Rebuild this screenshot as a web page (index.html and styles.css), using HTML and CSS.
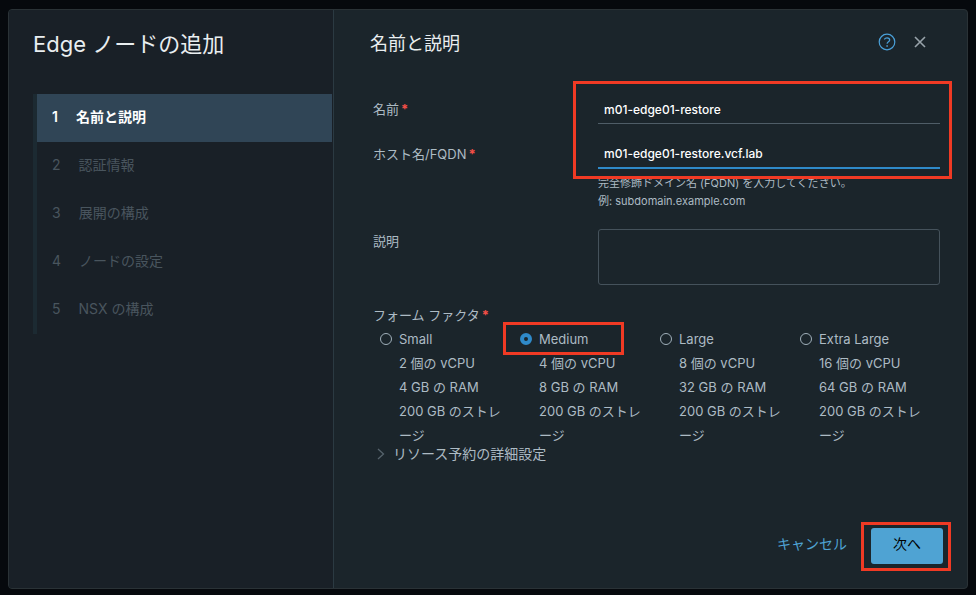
FILE: index.html
```html
<!DOCTYPE html>
<html lang="ja">

<head>
    <meta charset="UTF-8">
    <meta name="viewport" content="width=device-width, initial-scale=1.0">
    <title>Edge ノードの追加</title>
    <link rel="stylesheet" href="styles.css">
</head>

<body>
    <div class="wizard">
        <nav class="sidebar">
            <h1>Edge ノードの追加</h1>
            <ol class="steps">
                <li class="step active"><span>1</span><span>名前と説明</span></li>
                <li class="step"><span>2</span><span>認証情報</span></li>
                <li class="step"><span>3</span><span>展開の構成</span></li>
                <li class="step"><span>4</span><span>ノードの設定</span></li>
                <li class="step"><span>5</span><span>NSX の構成</span></li>
            </ol>
        </nav>

        <form class="content">
            <header class="header">
                <h2>名前と説明</h2>
                <button type="button" class="icon-button help" aria-label="ヘルプ">
                    <svg width="18" height="18" viewBox="0 0 18 18" fill="none" stroke="currentColor">
                        <circle cx="9" cy="9" r="7.8" stroke-width="1.2" />
                        <path d="M6.3 6.4C7 5.3 7.9 4.9 9 4.9c1.6 0 2.7.8 2.7 2.1 0 1.8-2.6 1.8-2.6 3.8" stroke-width="1.2" />
                        <path d="M9.1 12.2v1.5" stroke-width="1.5" />
                    </svg>
                </button>
                <button type="button" class="icon-button close" aria-label="閉じる">
                    <svg width="14" height="14" viewBox="0 0 14 14" fill="none" stroke="currentColor" stroke-width="1.6">
                        <path d="M2 2l10 10M12 2L2 12" />
                    </svg>
                </button>
            </header>

            <div class="fields">
                <div class="required-fields">
                    <div class="field">
                        <label for="name">名前<span class="required">*</span></label>
                        <input type="text" id="name" value="m01-edge01-restore">
                    </div>
                    <div class="field">
                        <label for="fqdn">ホスト名/FQDN<span class="required">*</span></label>
                        <input type="text" id="fqdn" class="focused" value="m01-edge01-restore.vcf.lab">
                    </div>
                    <div class="highlight highlight-fields"></div>
                </div>
                <p class="hint">完全修飾ドメイン名 (FQDN) を入力してください。<br>例: subdomain.example.com</p>
                <div class="field description">
                    <label for="description">説明</label>
                    <textarea id="description"></textarea>
                </div>

                <fieldset>
                    <legend>フォーム ファクタ<span class="required">*</span></legend>
                    <div class="sizes">
                        <div class="size">
                            <input type="radio" name="size" id="small">
                            <label for="small">Small</label>
                            <p>2 個の vCPU<br>4 GB の RAM<br>200 GB のストレージ</p>
                        </div>
                        <div class="size">
                            <input type="radio" name="size" id="medium" checked>
                            <label for="medium">Medium</label>
                            <p>4 個の vCPU<br>8 GB の RAM<br>200 GB のストレージ</p>
                            <div class="highlight highlight-size"></div>
                        </div>
                        <div class="size">
                            <input type="radio" name="size" id="large">
                            <label for="large">Large</label>
                            <p>8 個の vCPU<br>32 GB の RAM<br>200 GB のストレージ</p>
                        </div>
                        <div class="size">
                            <input type="radio" name="size" id="xlarge">
                            <label for="xlarge">Extra Large</label>
                            <p>16 個の vCPU<br>64 GB の RAM<br>200 GB のストレージ</p>
                        </div>
                    </div>
                </fieldset>

                <button type="button" class="advanced">
                    <svg width="8" height="14" viewBox="0 0 8 14" fill="none" stroke="#56636c" stroke-width="1.3">
                        <path d="M1 2l5.5 5L1 12" />
                    </svg>
                    リソース予約の詳細設定
                </button>
            </div>

            <footer class="footer">
                <button type="button" class="cancel">キャンセル</button>
                <div class="next-wrap">
                    <button type="button" class="next">次へ</button>
                    <div class="highlight highlight-next"></div>
                </div>
            </footer>
        </form>
    </div>
</body>

</html>
```

FILE: styles.css
```css
* {
    box-sizing: border-box;
}

body {
    margin: 0;
    min-height: 100vh;
    display: flex;
    padding: 9px 8px 6px;
    background: #06090d;
    color: #adbbc4;
    font-family: Inter, "Noto Sans CJK JP", sans-serif;
    font-size: 13px;
    line-height: 24px;
}

h1,
h2,
p,
ol {
    margin: 0;
    padding: 0;
}

button,
input,
textarea {
    font: inherit;
    color: inherit;
    background: none;
    border: none;
    padding: 0;
    margin: 0;
}

button {
    cursor: pointer;
}

.wizard {
    flex: 1;
    display: flex;
    border: 1px solid #2a3236;
    border-radius: 4px;
    background: #1b252b;
}

/* left side */
.sidebar {
    flex: 0 0 325px;
    padding: 10px 1px 0 24px;
    border-right: 1px solid #2b3a42;
    border-radius: 3px 0 0 3px;
    background: #192027;
}

h1 {
    font-size: 22px;
    font-weight: 400;
    line-height: 48px;
    color: #e9eef0;
}

.steps {
    margin-top: 26px;
    list-style: none;
    border-left: 4px solid #1c2a32;
}

.step {
    display: flex;
    gap: 18px;
    padding: 0 0 2px 15px;
    font-size: 14px;
    line-height: 46px;
    color: #49555e;
}

.step.active {
    background: #304556;
    color: #fff;
    font-weight: 600;
}

/* right side */
.content {
    flex: 1;
    min-width: 0;
    display: flex;
    flex-direction: column;
    padding: 10px 24px 24px 36px;
}

.header {
    display: flex;
    align-items: center;
    padding-right: 16px;
}

h2 {
    flex: 1;
    font-size: 18px;
    font-weight: 400;
    line-height: 48px;
    color: #e9eef0;
}

.icon-button {
    display: flex;
    padding-bottom: 4px;
}

.help {
    color: #4aa0d9;
}

.close {
    margin-left: 17px;
    color: #98a3aa;
}

.fields {
    padding: 26px 3px 0;
}

.required-fields {
    position: relative;
    display: grid;
    gap: 15px;
}

.field {
    display: grid;
    grid-template-columns: 225px 1fr;
    line-height: 30px;
}

.required {
    margin-left: 2px;
    color: #f54f47;
    font-weight: 700;
}

.field input {
    width: 100%;
    height: 30px;
    padding: 2px 6px 0;
    border-bottom: 1px solid #4f5d67;
    color: #fff;
    font-size: 12px;
    font-weight: 500;
    outline: none;
}

.field input.focused {
    border-bottom: 2px solid #2f8ac9;
}

.hint {
    margin: 5px 0 0 225px;
    font-size: 11px;
    line-height: 18px;
}

.description {
    margin-top: 19px;
    line-height: 24px;
}

textarea {
    width: 100%;
    height: 56px;
    border: 1px solid #45525b;
    border-radius: 3px;
    resize: none;
}

fieldset {
    margin: 18px 0 0;
    padding: 0;
    border: none;
}

legend {
    padding: 0;
}

.sizes {
    display: grid;
    grid-template-columns: repeat(4, 1fr);
    margin-left: 7px;
}

.size {
    position: relative;
    display: grid;
    grid-template-columns: 12px 1fr;
    column-gap: 7px;
    align-items: center;
    padding-right: 12px;
}

.size p {
    grid-column: 2;
}

.size input {
    appearance: none;
    width: 12px;
    height: 12px;
    border: 1px solid #a0b0ba;
    border-radius: 50%;
}

.size input:checked {
    border: 4px solid #2f8ac9;
}

.advanced {
    display: flex;
    align-items: center;
    gap: 8px;
    margin-left: 4px;
    font-size: 14px;
    line-height: 14px;
}

.footer {
    display: flex;
    justify-content: flex-end;
    align-items: center;
    gap: 24px;
    margin-top: auto;
    font-size: 14px;
}

.cancel {
    padding-bottom: 4px;
    color: #4fa3d3;
}

.next {
    width: 72px;
    height: 36px;
    padding-bottom: 4px;
    border-radius: 3px;
    background: #4fa3d3;
    color: #000;
}

.next-wrap {
    position: relative;
    display: flex;
}

/* red marker frames */
.highlight {
    position: absolute;
    border: 3px solid #f03a24;
    pointer-events: none;
}

.highlight-fields {
    top: -13px;
    right: -12px;
    bottom: -10px;
    left: 200px;
}

.highlight-size {
    top: -5px;
    right: 36px;
    left: -17px;
    height: 33px;
}

.highlight-next {
    top: -6px;
    right: -8px;
    bottom: -7px;
    left: -10px;
}
```
